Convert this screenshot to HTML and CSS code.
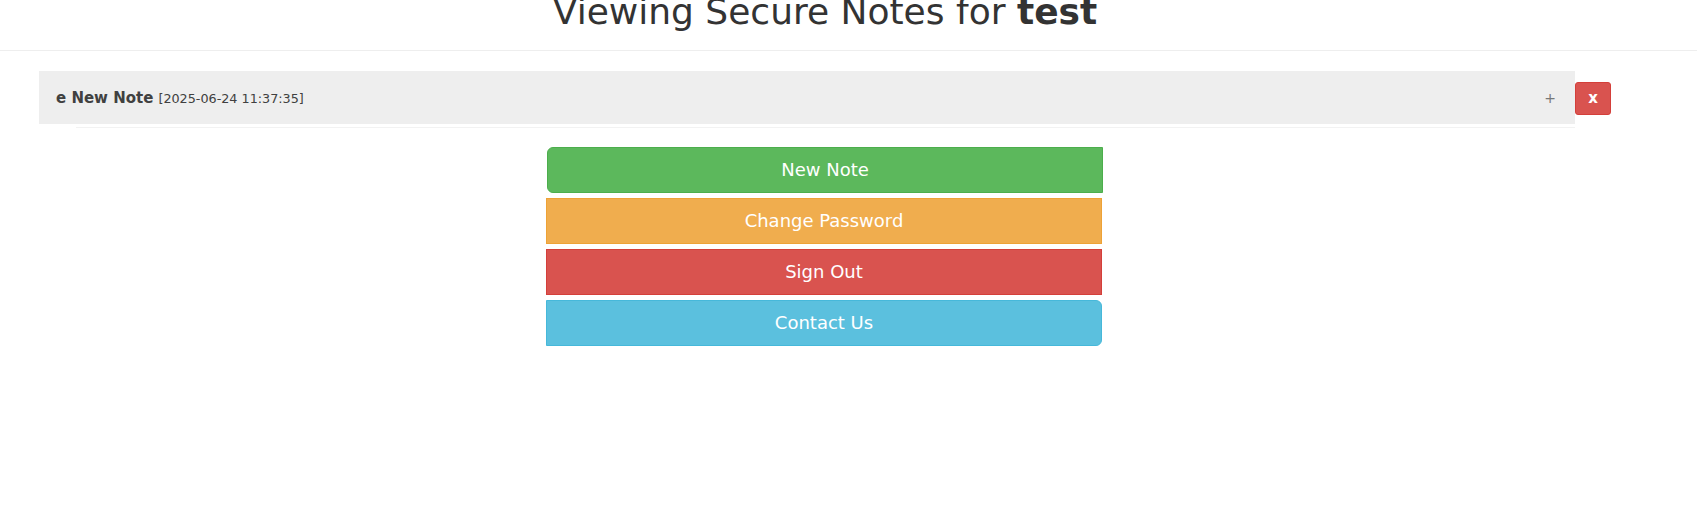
FILE: index.html
```html
<!DOCTYPE html>
<html lang="en">
<head>
<meta charset="utf-8">
<title>Secure Notes</title>
<link rel="stylesheet" href="styles.css">
</head>
<body>
  <header class="page-header">
    <h1 class="title">Viewing Secure Notes for <b>test</b></h1>
  </header>
  <main class="main">
    <div class="note-row">
      <div class="note-heading">
        <span class="note-title">e New Note</span>
        <small class="note-date">[2025-06-24 11:37:35]</small>
        <span class="note-toggle">+</span>
      </div>
      <button class="btn-delete" type="button">x</button>
    </div>
    <div class="note-divider"></div>
    <div class="actions">
      <button class="btn btn-success" type="button">New Note</button>
      <button class="btn btn-warning" type="button">Change Password</button>
      <button class="btn btn-danger" type="button">Sign Out</button>
      <button class="btn btn-info" type="button">Contact Us</button>
    </div>
  </main>
</body>
</html>
```
FILE: styles.css
```css
* { box-sizing: border-box; }

html, body {
  margin: 0;
  padding: 0;
  background: #fff;
  color: #333;
  font-family: "DejaVu Sans", sans-serif;
  font-size: 14px;
}

.page-header {
  padding-bottom: 8px;
  border-bottom: 1px solid #eee;
}

.title {
  margin: -8px 0 10px 0;
  padding-right: 47px;
  font-size: 36px;
  line-height: 39.6px;
  font-weight: normal;
  text-align: center;
  color: #333;
}

.title b { font-weight: bold; }

.main {
  padding: 20px 86px 0 39px;
}

.note-row {
  display: flex;
  align-items: flex-start;
}

.note-heading {
  flex: 1;
  display: flex;
  align-items: baseline;
  height: 53px;
  padding: 17px 19px 16px 17px;
  background: #eee;
  line-height: 20px;
}

.note-title {
  font-size: 15px;
  font-weight: bold;
  color: #404040;
}

.note-date {
  margin-left: 5px;
  font-size: 12.75px;
  color: #404040;
}

.note-toggle {
  margin-left: auto;
  font-size: 14px;
  color: #777;
}

.btn-delete {
  width: 36px;
  height: 33px;
  margin-top: 11px;
  padding: 0;
  border: 1px solid #d43f3a;
  border-radius: 3px;
  background: #d9534f;
  color: #fff;
  font-family: "DejaVu Sans", sans-serif;
  font-size: 15px;
  font-weight: bold;
  line-height: 20px;
}

.note-divider {
  margin: 3px 36px 0 37px;
  border-top: 1px solid #f2f2f2;
}

.actions {
  width: 557px;
  margin: 19px 0 0 507px;
  display: flex;
  flex-direction: column;
  gap: 5px;
}

.btn {
  display: block;
  width: 556px;
  height: 46px;
  padding: 10px 16px;
  border: 1px solid transparent;
  border-radius: 0;
  font-family: "DejaVu Sans", sans-serif;
  font-size: 18px;
  line-height: 24px;
  color: #fff;
  text-align: center;
}

.btn-success {
  margin-left: 1px;
  background: #5cb85c;
  border-color: #4cae4c;
  border-radius: 6px 0 0 6px;
}

.btn-warning {
  background: #f0ad4e;
  border-color: #eea236;
}

.btn-danger {
  background: #d9534f;
  border-color: #d43f3a;
}

.btn-info {
  background: #5bc0de;
  border-color: #46b8da;
  border-radius: 0 6px 6px 0;
}
```
